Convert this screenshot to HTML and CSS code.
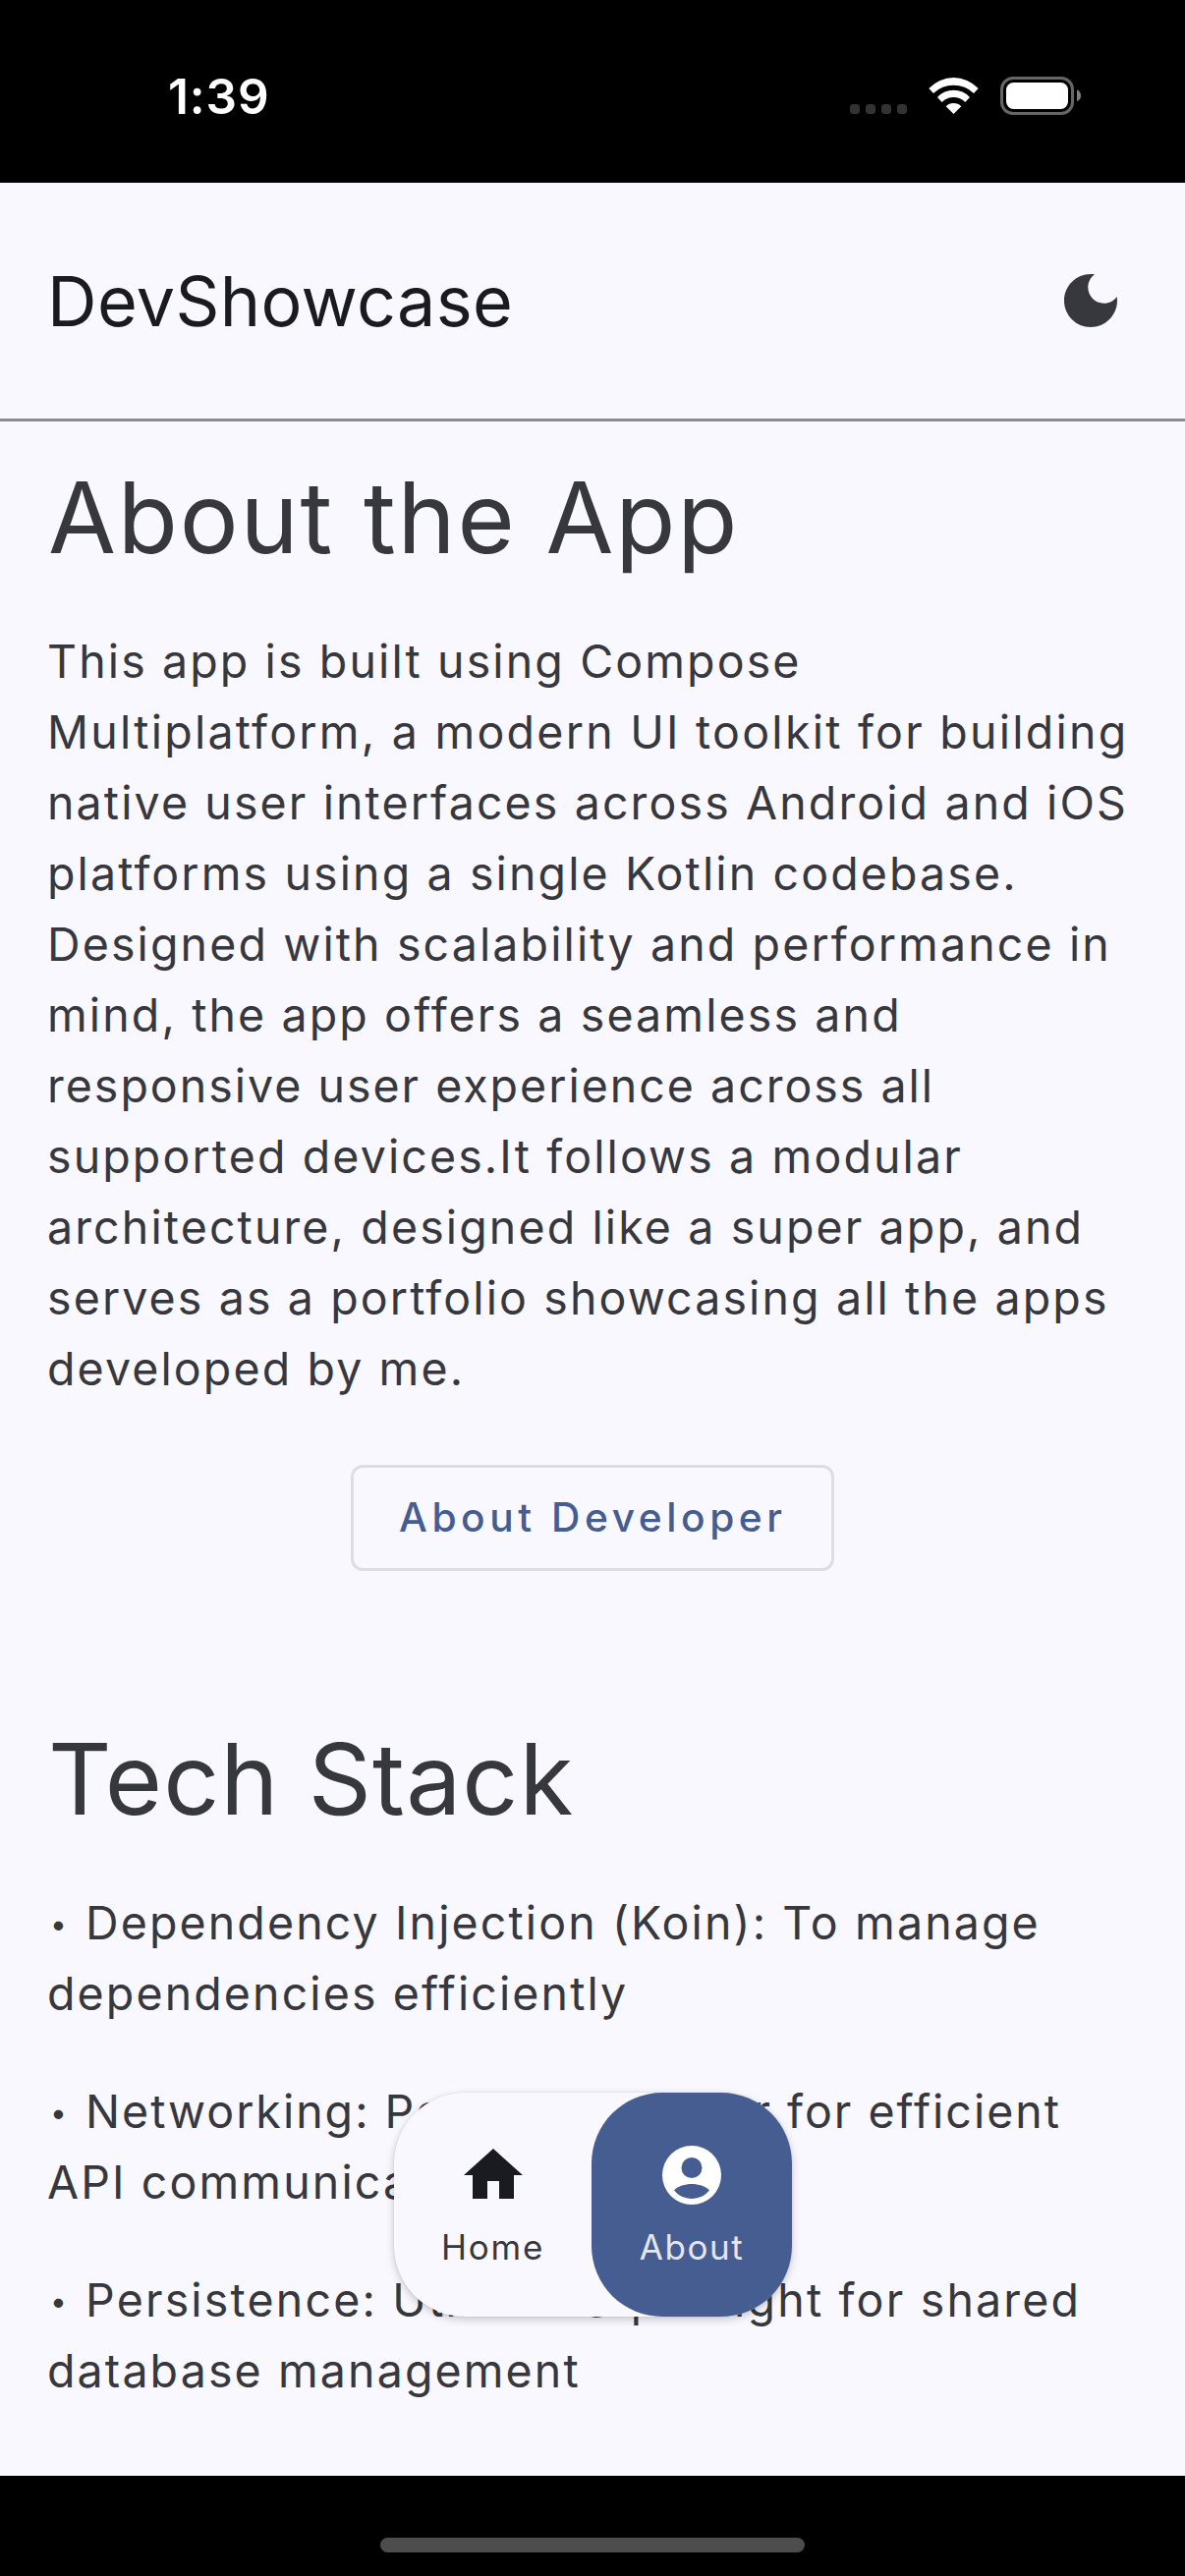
FILE: index.html
```html
<!DOCTYPE html>
<html lang="en">
<head>
<meta charset="utf-8">
<title>DevShowcase</title>
<link rel="stylesheet" href="styles.css">
</head>
<body>
<div class="screen">
  <div class="status-bar">
    <div class="time">1:39</div>
    <div class="indicators">
      <div class="signal"><i></i><i></i><i></i><i></i></div>
      <svg class="wifi" viewBox="0 0 51 37">
        <path d="M.3 11A34.4 34.4 0 0 1 50.7 11L46 16A29.5 29.5 0 0 0 5 16Z"/>
        <path d="M9 20A22.3 22.3 0 0 1 42 20L37.3 25A16.4 16.4 0 0 0 13.7 25Z"/>
        <path d="M17.7 29.3A11 11 0 0 1 33.3 29.3L25.5 37Z"/>
      </svg>
      <svg class="battery" viewBox="0 0 82 39">
        <rect x="1.5" y="1.5" width="72" height="36" rx="11.5" fill="none" stroke="#666" stroke-width="3"/>
        <rect x="6" y="6" width="63" height="27" rx="7.5" fill="#fff"/>
        <path d="M78 13.3C81 14.6 82 17 82 19.3S81 24 78 25.3Z" fill="#808080"/>
      </svg>
    </div>
  </div>

  <header class="app-bar">
    <h1>DevShowcase</h1>
    <svg class="moon" viewBox="0 0 24 24"><path d="M12 3c-4.97 0-9 4.03-9 9s4.03 9 9 9 9-4.03 9-9c0-.46-.04-.92-.1-1.36-.98 1.37-2.58 2.26-4.4 2.26-2.98 0-5.4-2.42-5.4-5.4 0-1.81.89-3.42 2.26-4.4C12.92 3.04 12.46 3 12 3z"/></svg>
  </header>

  <main class="content">
    <h2 class="about-title">About the App</h2>
    <p class="about-text">This app is built using Compose<br>
      <span class="wide">Multiplatform, a modern UI toolkit for building</span><br>
      native user interfaces across Android and iOS<br>
      platforms using a single Kotlin codebase.<br>
      Designed with scalability and performance in<br>
      mind, the app offers a seamless and<br>
      <span class="narrow">responsive user experience across all</span><br>
      supported devices.It follows a modular<br>
      architecture, designed like a super app, and<br>
      serves as a portfolio showcasing all the apps<br>
      developed by me.</p>
    <button class="developer">About Developer</button>
    <h2 class="stack-title">Tech Stack</h2>
    <div class="stack">
      <p><span class="bullet">•</span>Dependency Injection (Koin): To manage<br>dependencies efficiently</p>
      <p><span class="bullet">•</span><span class="narrow">Networking: Powered by Ktor for efficient</span><br>API communication</p>
      <p><span class="bullet">•</span><span class="wide-2">Persistence: Utilizes SqlDelight for shared</span><br>database management</p>
    </div>
  </main>

  <nav class="tabs">
    <div class="tab">
      <svg viewBox="0 0 24 24"><path d="M10 20v-6h4v6h5v-8h3L12 3 2 12h3v8z"/></svg>
      <span>Home</span>
    </div>
    <div class="tab active">
      <svg viewBox="0 0 24 24"><path fill-rule="evenodd" d="M12 2a10 10 0 1 0 0 20a10 10 0 1 0 0-20zM12 6a3.5 3.5 0 1 1 0 7a3.5 3.5 0 1 1 0-7zM6 17.1C7.5 15.7 9.6 15 12 15s4.5.7 6 2.1C16.6 18.900 14.400 20 12 20s-4.600-1.100-6-2.900z"/></svg>
      <span>About</span>
    </div>
  </nav>

  <footer class="system-bar"><div class="home-indicator"></div></footer>
</div>
</body>
</html>
```
FILE: styles.css
```css
* { box-sizing: border-box; }
body { margin: 0; background: #000; }

.screen {
  position: relative;
  display: flex;
  flex-direction: column;
  width: 1206px;
  height: 2622px;
  overflow: hidden;
  font-family: Inter, "Liberation Sans", sans-serif;
  color: #37383d;
}

.status-bar {
  display: flex;
  justify-content: space-between;
  height: 186px;
  padding: 68px 106px 0 171px;
  background: #000;
  color: #fff;
}
.time { font-size: 49.5px; font-weight: 600; line-height: 60px; letter-spacing: .9px; }
.indicators { display: flex; align-items: flex-start; padding-top: 10px; }
.signal { display: flex; gap: 6px; padding-top: 28px; }
.signal i { width: 10px; height: 10px; border-radius: 3.5px; background: #333; }
.wifi { width: 51px; height: 37px; margin: 1px 22px 0; fill: #fff; }
.battery { width: 82px; height: 39px; }

.app-bar {
  display: flex;
  align-items: center;
  justify-content: space-between;
  height: 243px;
  padding: 0 60px 0 48px;
  border-bottom: 3px solid #8a8b8f;
  background: #faf8ff;
}
h1, h2 { margin: 0; font-weight: 400; }
h1 { padding-top: 2px; font-size: 70px; line-height: 96px; letter-spacing: .37px; color: #1a1b20; }
.moon { width: 72px; height: 72px; fill: #37383d; }

.content { flex: 1; padding: 32px 48px 0; background: #faf8ff; }
h2 { font-size: 100px; line-height: 132px; padding-left: 1px; }
.about-title { letter-spacing: 1.8px; }
.stack-title { letter-spacing: 1.05px; }
p {
  margin: 0;
  font-size: 46.5px;
  line-height: 72px;
  letter-spacing: 2.12px;
  white-space: nowrap;
}
.wide { letter-spacing: 2.25px; }
.wide-2 { letter-spacing: 2.19px; }
.narrow { letter-spacing: 2px; }
.about-text { margin-top: 44px; }

.developer {
  display: block;
  width: 492px;
  height: 108px;
  margin: 62px auto 146px;
  padding: 0 0 0 46px;
  border: 3px solid #dedde4;
  border-radius: 12px;
  background: none;
  font: 500 40.7px/60px Inter, "Liberation Sans", sans-serif;
  letter-spacing: 4.55px;
  text-align: left;
  color: #465d91;
}

.stack { display: grid; gap: 48px; margin-top: 44px; }
.bullet {
  display: inline-block;
  width: 39px;
  padding-left: 3px;
  font-size: 30px;
  line-height: 0;
  vertical-align: 5px;
}

/* Floating tab pill over the scrolling content */
.tabs {
  position: absolute;
  left: 401px;
  top: 2130px;
  display: flex;
  width: 405px;
  height: 228px;
  border-radius: 72px;
  background: #faf8ff;
  box-shadow: 0 3px 9px rgba(0, 0, 0, .2), 0 0 2px rgba(0, 0, 0, .12);
}
.tab {
  display: flex;
  flex-direction: column;
  align-items: center;
  width: 201px;
  padding-top: 48px;
  border-radius: 72px;
}
.tab svg { width: 72px; height: 72px; fill: #1a1b20; }
.tab span { margin-top: 14px; font-size: 35px; line-height: 46px; letter-spacing: 1.75px; }
.tab.active { width: 204px; background: #465d91; color: #e3e7ef; }
.tab.active svg { fill: #fff; }
.tab.active span { letter-spacing: 1.56px; }

.system-bar {
  display: flex;
  justify-content: center;
  height: 102px;
  padding-top: 63px;
  background: #000;
}
.home-indicator { width: 432px; height: 15px; border-radius: 8px; background: #4d4d4d; }
```
